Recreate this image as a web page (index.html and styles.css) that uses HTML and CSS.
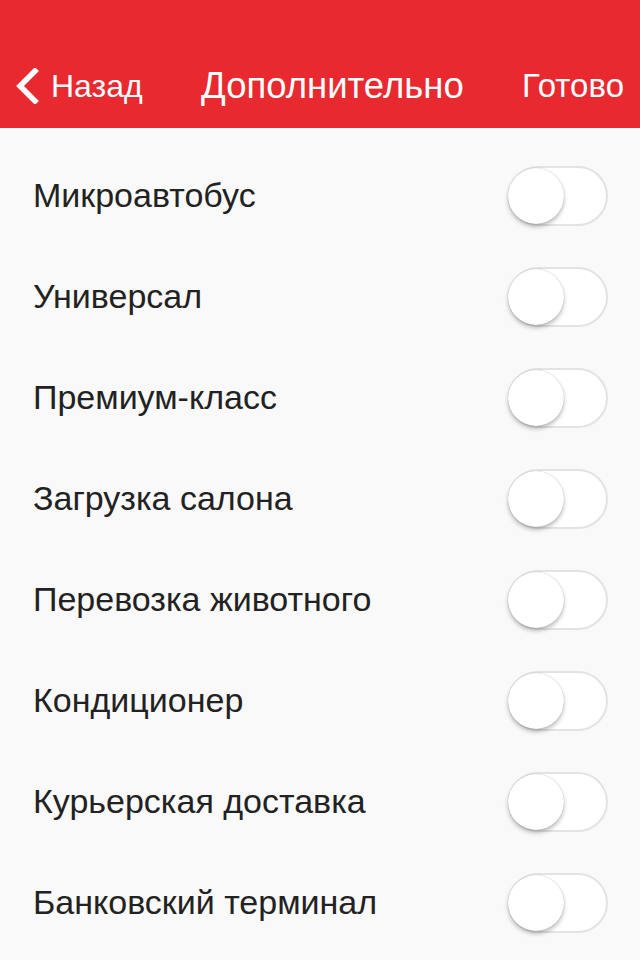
FILE: index.html
```html
<!DOCTYPE html>
<html lang="ru">
<head>
<meta charset="utf-8">
<link rel="stylesheet" href="styles.css">
</head>
<body>
<header class="nav">
  <div class="nav-bar">
    <a class="back">
      <svg class="chev" width="26" height="36" viewBox="0 0 26 36"><path d="M21 3 L6 18 L21 33" fill="none" stroke="#fff" stroke-width="5.5" stroke-linecap="square"/></svg>
      <span>Назад</span>
    </a>
    <div class="title">Дополнительно</div>
    <a class="done">Готово</a>
  </div>
</header>
<main class="list">
  <div class="row"><span class="label">Микроавтобус</span><span class="toggle"><span class="knob"></span></span></div>
  <div class="row"><span class="label">Универсал</span><span class="toggle"><span class="knob"></span></span></div>
  <div class="row"><span class="label">Премиум-класс</span><span class="toggle"><span class="knob"></span></span></div>
  <div class="row"><span class="label">Загрузка салона</span><span class="toggle"><span class="knob"></span></span></div>
  <div class="row"><span class="label">Перевозка животного</span><span class="toggle"><span class="knob"></span></span></div>
  <div class="row"><span class="label">Кондиционер</span><span class="toggle"><span class="knob"></span></span></div>
  <div class="row"><span class="label">Курьерская доставка</span><span class="toggle"><span class="knob"></span></span></div>
  <div class="row"><span class="label">Банковский терминал</span><span class="toggle"><span class="knob"></span></span></div>
</main>
</body>
</html>
```
FILE: styles.css
```css
html, body {
  margin: 0;
  padding: 0;
  background: #f9f9f9;
  font-family: "Liberation Sans", Arial, sans-serif;
}
body {
  width: 640px;
  height: 960px;
  overflow: hidden;
}
.nav {
  background: #e8292f;
  height: 128px;
  padding-top: 44px;
  box-sizing: border-box;
  color: #fff;
}
.nav-bar {
  height: 84px;
  display: flex;
  align-items: center;
  justify-content: space-between;
  padding: 0 16px 0 14px;
  font-size: 32px;
}
.back {
  display: flex;
  align-items: center;
  gap: 11px;
}
.chev {
  display: block;
}
.title {
  font-size: 36.5px;
}
.done {
  font-size: 33px;
}
.list {
  padding-top: 17px;
}
.row {
  height: 101px;
  display: flex;
  align-items: center;
  justify-content: space-between;
  padding: 0 32px 0 33px;
}
.label {
  font-size: 34px;
  color: #222;
}
.toggle {
  position: relative;
  width: 100px;
  height: 60px;
  box-sizing: border-box;
  border: 2px solid #e3e3e3;
  border-radius: 30px;
  background: #fff;
}
.knob {
  position: absolute;
  left: -2px;
  top: 0;
  width: 56px;
  height: 56px;
  border-radius: 50%;
  background: #fff;
  box-shadow: 0 3px 4px rgba(0,0,0,0.25), 0 0 1px rgba(0,0,0,0.3);
}
```
